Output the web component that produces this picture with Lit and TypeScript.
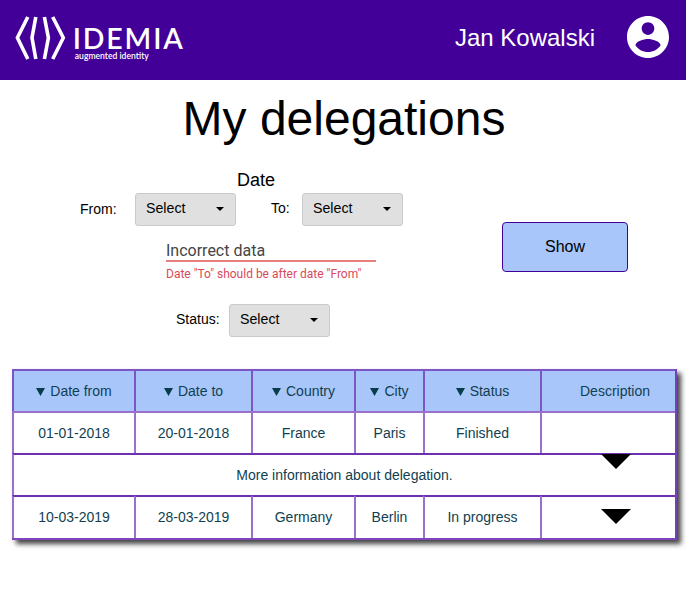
import { LitElement, html, css } from "lit";
import { customElement, property } from "lit/decorators.js";

@customElement("select-box")
class SelectBox extends LitElement {
  @property() label = "Select";
  static styles = css`
    :host {
      display: flex; box-sizing: border-box; width: 101px; height: 33px;
      align-items: center; justify-content: space-between; padding: 0 11px 2px 10px;
      background: #e0e0e0; border: 1px solid #cacaca; border-radius: 3px;
      font: 14.2px/18px "Liberation Sans", Arial, sans-serif; color: #000;
    }
    span { padding-bottom: 2px; }
    svg { display: block; margin-top: 1px; }
  `;
  render() {
    return html`<span>${this.label}</span>
      <svg width="8" height="4" viewBox="0 0 8 4"><path d="M0 0h8L4 4z" /></svg>`;
  }
}

@customElement("app-root")
class AppRoot extends LitElement {
  private columns = ["Date from", "Date to", "Country", "City", "Status"];
  private first = ["01-01-2018", "20-01-2018", "France", "Paris", "Finished"];
  private second = ["10-03-2019", "28-03-2019", "Germany", "Berlin", "In progress"];

  static styles = css`
    :host {
      display: block; height: 615px; overflow: hidden; background: #fff; color: #000;
      font-family: "Liberation Sans", Arial, sans-serif;
    }
    header {
      height: 80px; box-sizing: border-box; background: #430099; color: #fff;
      display: flex; align-items: center; padding: 0 17px 0 14px;
    }
    .logo { display: block; margin-top: -4px; }
    .brand { font: 600 28.5px Lato, sans-serif; }
    .tag { font: 600 8.8px Lato, sans-serif; }
    .user { margin-left: auto; margin-right: 32px; font-size: 24px; line-height: 28px; padding-bottom: 4px; }
    .avatar { display: block; margin-bottom: 6px; }
    h1 { margin: 11px 0 0; padding-left: 2px; font-size: 48px; line-height: 56px; font-weight: 400; text-align: center; }
    .filters { display: grid; grid-template-columns: 502px 126px; height: 222px; }
    .fields { padding-top: 23px; }
    .date { margin-left: 237px; font-size: 18px; line-height: 20px; }
    .row { display: flex; font-size: 14px; line-height: 32px; }
    .dates { margin: 3px 0 0 80px; }
    .from { width: 55px; }
    .to { width: 31px; margin-left: 35px; line-height: 31px; }
    .error { margin: 16px 0 0 166px; width: 210px; font-family: Roboto, sans-serif; }
    .value { height: 18px; font-size: 16px; line-height: 18px; color: #454545; border-bottom: 2px solid #e68080; }
    .hint { font-size: 12px; line-height: 14px; margin-top: 5px; color: #d84a5a; }
    .status { margin: 23px 0 0 176px; line-height: 31px; }
    .status span { width: 53px; }
    button {
      margin: 75px 0 0; height: 50px; padding: 0; background: #a8c6fa;
      border: 1px solid #430099; border-radius: 4px; color: #000;
      font: 16px "Liberation Sans", Arial, sans-serif;
    }
    .table {
      margin-left: 12px; width: 665px; box-sizing: border-box; display: grid;
      grid-template-columns: 122px 117px 103px 69px 117px 135px;
      grid-template-rows: 42px 42px 42px 43px;
      border-right: 2px solid #7440b8; border-bottom: 2px solid #7d46bd;
      box-shadow: 4px 4px 5px #444;
      font-size: 14px; line-height: 16px; color: #103f50; background: #fff;
    }
    .cell {
      border-left: 2px solid #9a70cc; border-top: 2px solid #9a70cc;
      display: flex; align-items: center; justify-content: center; gap: 5px;
    }
    .head { background: #a8c6fa; border-color: #7c55c6; }
    .desc { padding-left: 13px; }
    .more { grid-column: 1 / -1; border-top-color: #6e30b1; }
    .last { padding-bottom: 1px; border-top-color: #6e30b1; }
    .sort { display: block; margin-top: 1px; }
    .arrow { display: block; margin-left: 15px; }
    .last .arrow { margin-bottom: 2px; }
    .hanging { position: relative; top: 28px; }
  `;

  private arrow(hanging = false) {
    return html`<svg class="arrow ${hanging ? "hanging" : ""}" width="30" height="15" viewBox="0 0 30 15"><path d="M0 0h30L15 15z" /></svg>`;
  }

  render() {
    return html`
      <header>
        <svg class="logo" width="172" height="48" viewBox="0 0 172 48">
          <g fill="none" stroke="#fff" stroke-width="3.6">
            <path d="M13.8 3 3.4 23.8 13.8 45" />
            <path d="M21.8 3 18 23.8 21.8 45" />
            <path d="M30.4 3 34.4 23.8 30.4 45" />
            <path d="M38.7 3 49.3 23.8 38.7 45" />
          </g>
          <text class="brand" x="58.8" y="34.8" textLength="110" fill="#fff">IDEMIA</text>
          <text class="tag" x="60.8" y="44.6" textLength="74" lengthAdjust="spacingAndGlyphs" fill="#fff">augmented identity</text>
        </svg>
        <span class="user">Jan Kowalski</span>
        <svg class="avatar" width="42" height="42" viewBox="2 2 20 20" fill="#fff">
          <path d="M12 2C6.48 2 2 6.48 2 12s4.48 10 10 10 10-4.48 10-10S17.52 2 12 2zm0 3c1.66 0 3 1.34 3 3s-1.34 3-3 3-3-1.34-3-3 1.34-3 3-3zm0 14.2c-2.5 0-4.71-1.28-6-3.22.03-1.99 4-3.08 6-3.08 1.99 0 5.97 1.09 6 3.08-1.29 1.94-3.5 3.22-6 3.22z" />
        </svg>
      </header>
      <h1>My delegations</h1>
      <section class="filters">
        <div class="fields">
          <div class="date">Date</div>
          <div class="row dates">
            <span class="from">From:</span><select-box></select-box>
            <span class="to">To:</span><select-box></select-box>
          </div>
          <div class="error">
            <div class="value">Incorrect data</div>
            <div class="hint">Date "To" should be after date "From"</div>
          </div>
          <div class="row status"><span>Status:</span><select-box></select-box></div>
        </div>
        <button>Show</button>
      </section>
      <section class="table">
        ${this.columns.map(
          (c) => html`<div class="cell head">
            <svg class="sort" width="9" height="8" viewBox="0 0 9 8" fill="#063c4c"><path d="M0 0h9L4.5 8z" /></svg>${c}
          </div>`
        )}
        <div class="cell head desc">Description</div>
        ${this.first.map((v) => html`<div class="cell">${v}</div>`)}
        <div class="cell">${this.arrow(true)}</div>
        <div class="cell more">More information about delegation.</div>
        ${this.second.map((v) => html`<div class="cell last">${v}</div>`)}
        <div class="cell last">${this.arrow()}</div>
      </section>
    `;
  }
}
